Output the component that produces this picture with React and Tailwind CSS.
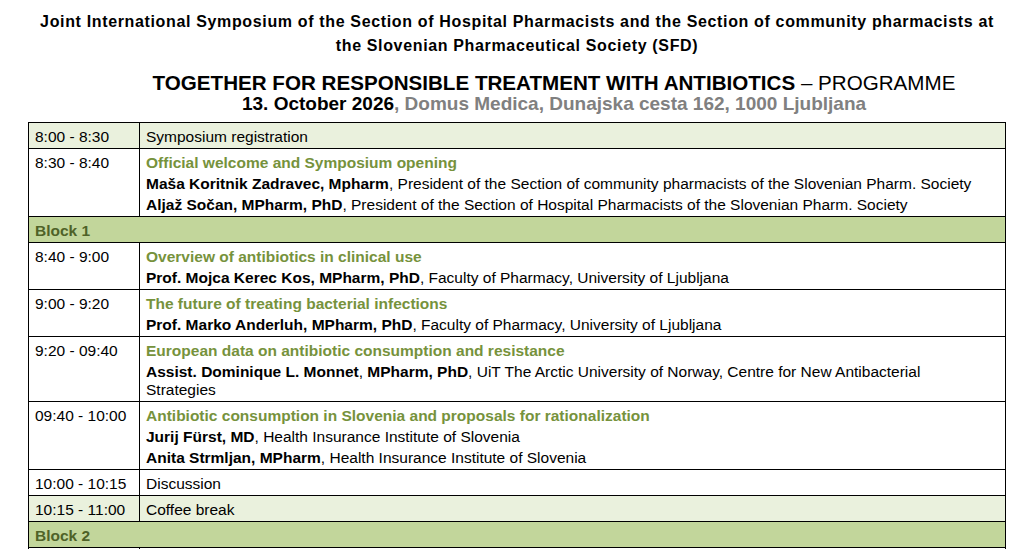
const sessions = [
  { kind: 'plain', time: '8:00 - 8:30', text: 'Symposium registration', shade: true },
  {
    kind: 'talk',
    time: '8:30 - 8:40',
    title: 'Official welcome and Symposium opening',
    speakers: [
      { name: 'Maša Koritnik Zadravec, Mpharm', role: 'President of the Section of community pharmacists of the Slovenian Pharm. Society' },
      { name: 'Aljaž Sočan, MPharm, PhD', role: 'President of the Section of Hospital Pharmacists of the Slovenian Pharm. Society' },
    ],
  },
  { kind: 'block', text: 'Block 1' },
  {
    kind: 'talk',
    time: '8:40 - 9:00',
    title: 'Overview of antibiotics in clinical use',
    speakers: [{ name: 'Prof. Mojca Kerec Kos, MPharm, PhD', role: 'Faculty of Pharmacy, University of Ljubljana' }],
  },
  {
    kind: 'talk',
    time: '9:00 - 9:20',
    title: 'The future of treating bacterial infections',
    speakers: [{ name: 'Prof. Marko Anderluh, MPharm, PhD', role: 'Faculty of Pharmacy, University of Ljubljana' }],
  },
  {
    kind: 'talk',
    time: '9:20 - 09:40',
    title: 'European data on antibiotic consumption and resistance',
    speakers: [
      {
        name: 'Assist. Dominique L. Monnet',
        extra: 'MPharm, PhD',
        role: 'UiT The Arctic University of Norway, Centre for New Antibacterial',
        wrap: 'Strategies',
      },
    ],
  },
  {
    kind: 'talk',
    time: '09:40 - 10:00',
    title: 'Antibiotic consumption in Slovenia and proposals for rationalization',
    speakers: [
      { name: 'Jurij Fürst, MD', role: 'Health Insurance Institute of Slovenia' },
      { name: 'Anita Strmljan, MPharm', role: 'Health Insurance Institute of Slovenia' },
    ],
  },
  { kind: 'plain', time: '10:00 - 10:15', text: 'Discussion' },
  { kind: 'plain', time: '10:15 - 11:00', text: 'Coffee break', shade: true },
  { kind: 'block', text: 'Block 2' },
  { kind: 'plain', time: '\u00a0', text: '\u00a0' },
];

function Speaker({ s }) {
  return (
    <p className="mt-[3px]">
      <span className="font-bold">{s.name}</span>
      {s.extra && (
        <>
          , <span className="font-bold">{s.extra}</span>
        </>
      )}
      , {s.role}
      {s.wrap && (
        <>
          <br />
          {s.wrap}
        </>
      )}
    </p>
  );
}

function Row({ item }) {
  if (item.kind === 'block') {
    return (
      <tr className="bg-[#c2d69b]">
        <td colSpan={2} className="border border-black px-[6px] pt-[5px] pb-[2px] font-bold text-[#4f6228]">
          {item.text}
        </td>
      </tr>
    );
  }

  const bg = item.shade ? 'bg-[#eaf1dd]' : 'bg-white';

  return (
    <tr className={bg}>
      <td className="w-[111px] border border-black px-[6px] pt-[5px] pb-[2px] align-top">{item.time}</td>
      <td className="border border-black px-[6px] pt-[5px] pb-[2px] align-top">
        {item.kind === 'plain' ? (
          item.text
        ) : (
          <>
            <p className="font-bold text-[#76923c]">{item.title}</p>
            {item.speakers.map((s) => (
              <Speaker key={s.name} s={s} />
            ))}
          </>
        )}
      </td>
    </tr>
  );
}

export default function App() {
  return (
    <div className="min-h-screen bg-white font-['Liberation_Sans',Arial,sans-serif] text-black">
      {/* Header */}
      <header className="pt-[10px]">
        <div className="pl-[18px] text-center text-[16px] leading-[24px] font-bold tracking-[0.65px]">
          <p>Joint International Symposium of the Section of Hospital Pharmacists and the Section of community pharmacists at</p>
          <p>the Slovenian Pharmaceutical Society (SFD)</p>
        </div>
        <div className="mt-[14px] pl-[92px] text-center">
          <p className="text-[20.6px] leading-[22px]">
            <span className="font-bold">TOGETHER FOR RESPONSIBLE TREATMENT WITH ANTIBIOTICS</span> – PROGRAMME
          </p>
          <p className="text-[19px] leading-[20px] font-bold text-[#808080]">
            <span className="text-black">13. October 2026</span>, Domus Medica, Dunajska cesta 162, 1000 Ljubljana
          </p>
        </div>
      </header>

      {/* Programme table */}
      <table className="mt-[8px] ml-[28px] w-[978px] border-collapse border border-black text-[15.5px] leading-[18px]">
        <tbody>
          {sessions.map((item, i) => (
            <Row key={i} item={item} />
          ))}
        </tbody>
      </table>
    </div>
  );
}
